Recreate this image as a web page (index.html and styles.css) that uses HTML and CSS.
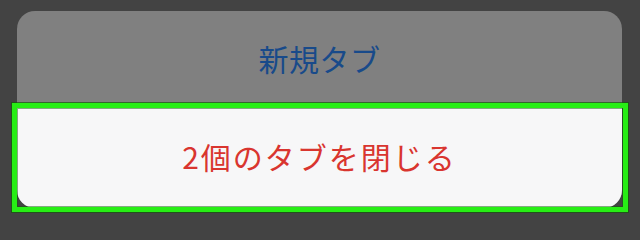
FILE: index.html
```html
<!DOCTYPE html>
<html lang="ja">
<head>
<meta charset="utf-8">
<link rel="stylesheet" href="styles.css">
</head>
<body>
<div class="screen">
  <div class="sheet">
    <div class="action action-new">新規タブ</div>
    <div class="action action-close">2個のタブを閉じる</div>
  </div>
  <div class="highlight"></div>
</div>
</body>
</html>
```

FILE: styles.css
```css
html, body {
  margin: 0;
  padding: 0;
  height: 216px;
  overflow: hidden;
}
body {
  background: #434343;
  font-family: "Noto Sans CJK JP", "Noto Sans", sans-serif;
}
.screen {
  position: relative;
  width: 640px;
  height: 216px;
  padding-top: 11px;
  box-sizing: border-box;
  overflow: hidden;
}
.sheet {
  margin: 0 18px 0 17px;
  height: 197px;
  background: #808080;
  border-radius: 18px;
  display: flex;
  flex-direction: column;
}
.action {
  display: flex;
  align-items: center;
  justify-content: center;
  font-size: 30px;
  letter-spacing: 0.5px;
  padding-bottom: 4px;
  box-sizing: border-box;
}
.action-new {
  height: 97px;
  color: #184a8a;
}
.action-close {
  flex: 1;
  background: #f7f7f8;
  color: #d9352f;
  letter-spacing: 2px;
  border-radius: 0 0 18px 18px;
}
.highlight {
  position: absolute;
  left: 12px;
  top: 103px;
  width: 616px;
  height: 109px;
  box-sizing: border-box;
  border: 5px solid #27ee15;
  box-shadow: 0 0 0 1px rgba(20, 90, 10, 0.7), inset 0 0 0 1px rgba(20, 90, 10, 0.5);
}
```
